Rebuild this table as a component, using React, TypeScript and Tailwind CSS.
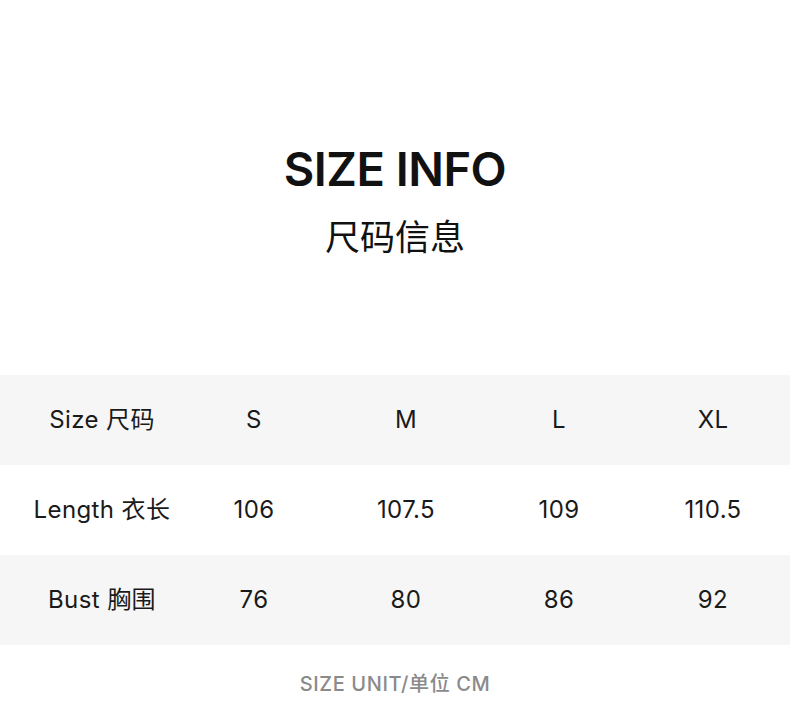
const latin = { fontFamily: 'Inter, "Noto Sans CJK SC", sans-serif' }

const rows = [
  { label: 'Size 尺码', cells: ['S', 'M', 'L', 'XL'], shaded: true },
  { label: 'Length 衣长', cells: ['106', '107.5', '109', '110.5'], shaded: false },
  { label: 'Bust 胸围', cells: ['76', '80', '86', '92'], shaded: true },
]

export default function App() {
  return (
    <div className="h-[707px] w-[790px] bg-white text-[#1a1a1a]" style={latin}>
      {/* 标题 */}
      <div className="flex flex-col items-center pt-[141px]">
        <h1 className="text-[47px] font-semibold leading-[56px] tracking-[-0.5px] text-[#111]">SIZE INFO</h1>
        <div className="mt-[18px] text-[35px] leading-[44px] text-[#111]">尺码信息</div>
      </div>

      {/* 表格 */}
      <div className="mt-[116px]">
        {rows.map((r) => (
          <div
            key={r.label}
            className={`grid h-[90px] grid-cols-[178px_152px_152px_154px_154px] items-center text-[24px] tracking-[0.4px] ${r.shaded ? 'bg-[#f6f6f6]' : 'bg-white'}`}
          >
            <div className="pl-[26px] text-center">{r.label}</div>
            {r.cells.map((c) => (
              <div key={c} className="text-center">
                {c}
              </div>
            ))}
          </div>
        ))}
      </div>

      <div className="mt-[24px] text-center text-[20px] font-medium tracking-[0.6px] text-[#8a8a8a]">SIZE UNIT/单位 CM</div>
    </div>
  )
}
